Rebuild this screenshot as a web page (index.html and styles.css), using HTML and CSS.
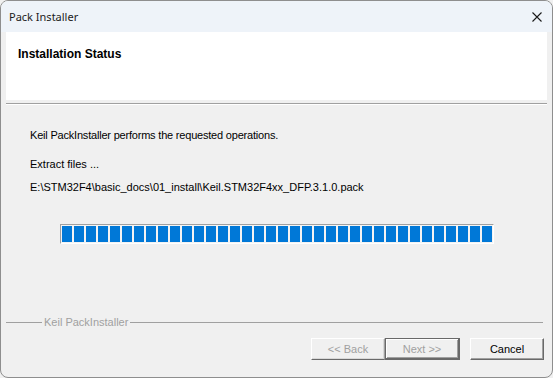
FILE: index.html
```html
<!DOCTYPE html>
<html lang="en">
<head>
    <meta charset="UTF-8">
    <meta name="viewport" content="width=device-width, initial-scale=1.0">
    <title>Pack Installer</title>
    <link rel="stylesheet" href="styles.css">
</head>
<body>
    <div class="window">
        <div class="title-bar">
            <span class="title-text">Pack Installer</span>
            <button class="close-btn" aria-label="Close">
                <svg width="10" height="10" viewBox="0 0 10 10">
                    <path d="M0.5 0.5 L9.5 9.5 M9.5 0.5 L0.5 9.5" stroke="#1a1a1a" stroke-width="1.1" fill="none"/>
                </svg>
            </button>
        </div>

        <div class="header-box">
            <p class="header-title">Installation Status</p>
        </div>
        <div class="etched-line"></div>

        <div class="main-box">
            <p class="line-1">Keil PackInstaller performs the requested operations.</p>
            <p class="line-2">Extract files ...</p>
            <p class="line-3">E:\STM32F4\basic_docs\01_install\Keil.STM32F4xx_DFP.3.1.0.pack</p>

            <div class="progress">
                <div class="progress-fill"></div>
            </div>
        </div>

        <div class="footer">
            <div class="group-line">
                <span class="rule rule-short"></span>
                <span class="group-text">Keil PackInstaller</span>
                <span class="rule rule-long"></span>
            </div>
            <div class="btn-row">
                <button class="btn btn-back" disabled>&lt;&lt; Back</button>
                <button class="btn btn-next" disabled>Next &gt;&gt;</button>
                <button class="btn btn-cancel">Cancel</button>
            </div>
        </div>
    </div>
</body>
</html>
```

FILE: styles.css
```css
*{
    margin: 0;
    padding: 0;
    box-sizing: border-box;
}

body{
    background: #f0f0f0;
    font-family: "Liberation Sans", Arial, sans-serif;
    font-size: 11px;
    color: #000;
}

.window{
    width: 553px;
    height: 378px;
    border: 1px solid #8e8e8e;
    border-radius: 8px;
    overflow: hidden;
    background: #f0f0f0;
    display: flex;
    flex-direction: column;
}

/* title bar */
.title-bar{
    height: 31px;
    background: #eef3f9;
    display: flex;
    align-items: center;
    justify-content: space-between;
    padding-left: 8px;
}

.title-text{
    font-family: "Noto Sans", sans-serif;
    font-size: 11px;
    color: #1b1b1b;
}

.close-btn{
    width: 30px;
    height: 31px;
    border: none;
    background: transparent;
    display: flex;
    align-items: center;
    justify-content: center;
}

/* white header */
.header-box{
    height: 68px;
    margin: 0 5px;
    background: #ffffff;
    padding: 15px 0 0 12px;
}

.header-title{
    font-weight: bold;
    font-size: 12px;
    line-height: 14px;
}

.etched-line{
    height: 2px;
    margin: 3px 5px 0 5px;
    border-top: 1px solid #a0a0a0;
    border-bottom: 1px solid #ffffff;
}

/* content */
.main-box{
    flex: 1;
    padding: 23px 0 0 29px;
}

.main-box p{
    line-height: 14px;
}

.line-1{
    letter-spacing: -0.2px;
}

.line-2{
    margin-top: 15px;
}

.line-3{
    margin-top: 9px;
}

.progress{
    width: 434px;
    height: 20px;
    margin: 30px 0 0 30px;
    padding: 1px;
    background: #f3f3f3;
    border-top: 1px solid #a0a0a0;
    border-left: 1px solid #a0a0a0;
    border-right: 1px solid #ffffff;
    border-bottom: 1px solid #ffffff;
}

.progress-fill{
    width: 430px;
    height: 16px;
    background: repeating-linear-gradient(to right, #0078d7 0 10px, transparent 10px 12px);
}

/* footer */
.footer{
    padding-bottom: 17px;
}

.group-line{
    display: flex;
    align-items: center;
    height: 14px;
    margin: 0 9px 0 5px;
}

.rule{
    height: 1px;
    background: #a0a0a0;
}

.rule-short{
    width: 36px;
}

.rule-long{
    flex: 1;
}

.group-text{
    color: #a0a0a0;
    padding: 0 2px;
    line-height: 14px;
}

.btn-row{
    display: flex;
    justify-content: flex-end;
    margin-top: 9px;
    padding-right: 8px;
}

.btn{
    width: 74px;
    height: 22px;
    font-family: "Liberation Sans", Arial, sans-serif;
    font-size: 11px;
    background: #f0f0f0;
    color: #000;
    border: 1px solid;
    border-color: #ffffff #696969 #696969 #ffffff;
    box-shadow: inset -1px -1px #a0a0a0;
}

.btn:disabled{
    color: #a0a0a0;
}

.btn-back{
    border-color: #ffffff #a0a0a0 #696969 #ffffff;
    box-shadow: inset -1px -1px #d8d8d8;
}

.btn-next{
    width: 75px;
    border: 2px solid #696969;
    border-top-width: 1px;
    border-left-width: 1px;
    box-shadow: inset 1px 1px #ffffff, inset -1px -1px #a0a0a0;
}

.btn-cancel{
    margin-left: 10px;
}
```
